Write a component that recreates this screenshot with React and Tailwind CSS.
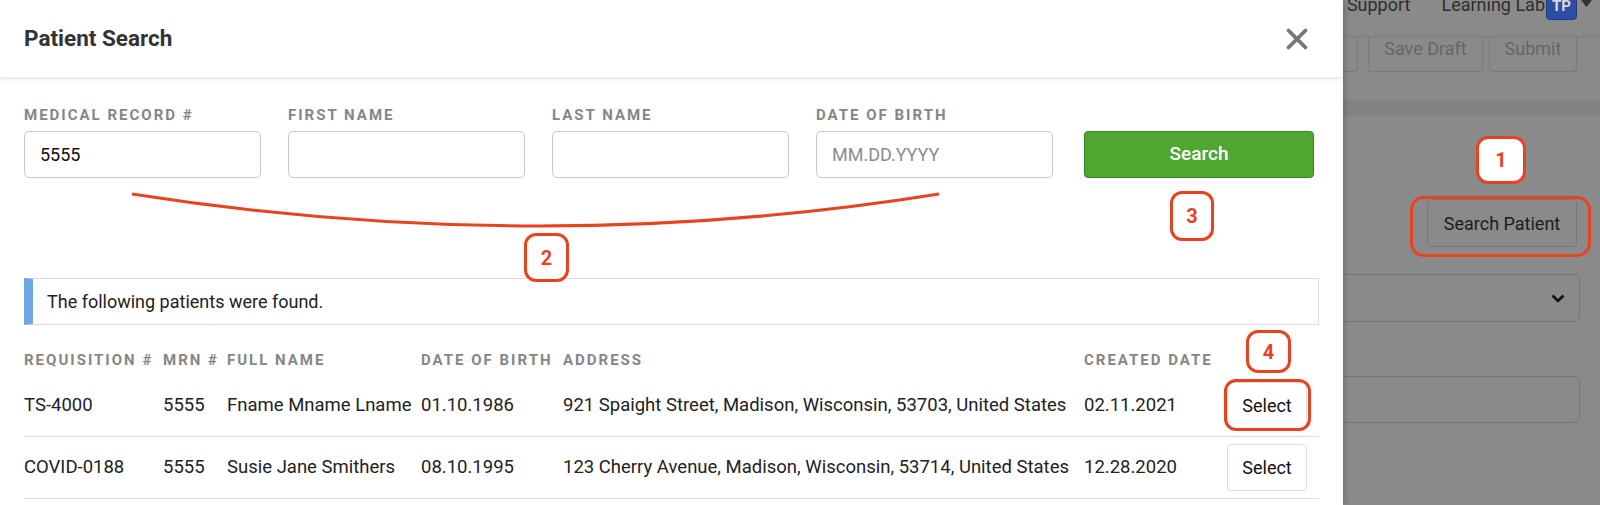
import { X } from 'lucide-react'

const font = { fontFamily: 'Roboto, "Liberation Sans", sans-serif' }

const fields = [
  { label: 'Medical Record #', value: '5555' },
  { label: 'First Name', value: '' },
  { label: 'Last Name', value: '' },
  { label: 'Date of Birth', value: '', placeholder: 'MM.DD.YYYY' },
]

const patients = [
  {
    req: 'TS-4000', mrn: '5555', name: 'Fname Mname Lname', dob: '01.10.1986',
    address: '921 Spaight Street, Madison, Wisconsin, 53703, United States', created: '02.11.2021',
  },
  {
    req: 'COVID-0188', mrn: '5555', name: 'Susie Jane Smithers', dob: '08.10.1995',
    address: '123 Cherry Avenue, Madison, Wisconsin, 53714, United States', created: '12.28.2020',
  },
]

const cols = 'grid grid-cols-[139px_64px_194px_142px_521px_143px_1fr] items-center'
const capLabel = 'text-[15px] font-bold uppercase tracking-[2px] text-[#868686]'

function Badge({ n, className }) {
  return (
    <div className={`absolute z-20 flex items-center justify-center rounded-[12px] border-[3px] border-[#e8431f] bg-white text-[20px] font-bold text-[#e8431f] ${className}`}>
      {n}
    </div>
  )
}

function PatientModal() {
  return (
    <div className="relative z-10 h-full w-[1343px] shrink-0 bg-white shadow-[2px_0_6px_rgba(0,0,0,0.18)]">
      {/* header */}
      <div className="relative z-10 flex h-[77px] items-center justify-between pl-6 pr-[29px] shadow-[0_2px_4px_rgba(0,0,0,0.1)]">
        <h1 className="text-[22.5px] font-bold text-[#333]">Patient Search</h1>
        <X size={34} strokeWidth={2.7} className="text-[#777]" />
      </div>

      {/* search form */}
      <div className="flex items-end gap-[27px] px-6 pt-[28px]">
        {fields.map(f => (
          <div key={f.label} className="w-[237px]">
            <label className={`${capLabel} block leading-5`}>{f.label}</label>
            <div className="mt-[6px] flex h-[47px] items-center rounded-[5px] border border-[#c8c8c8] px-[15px] text-[18px]">
              {f.value ? <span className="text-[#111]">{f.value}</span> : <span className="text-[#8c8c8c]">{f.placeholder}</span>}
            </div>
          </div>
        ))}
        <button className="ml-1 h-[47px] w-[230px] rounded-[4px] border border-[#2f8a1c] bg-[#4fa732] text-[19px] font-medium text-white">
          Search
        </button>
      </div>

      {/* results */}
      <div className="mx-6 mt-[100px] flex h-[47px] items-center border border-l-[9px] border-[#dcdcdc] border-l-[#6fa6e6] pl-[14px] text-[18px] text-[#222]">
        The following patients were found.
      </div>

      <div className="mx-6 mt-[20px]">
        <div className={`${cols} h-[30px] ${capLabel}`}>
          <div>Requisition #</div>
          <div>MRN #</div>
          <div>Full Name</div>
          <div>Date of Birth</div>
          <div>Address</div>
          <div>Created Date</div>
          <div />
        </div>
        {patients.map(p => (
          <div key={p.req} className={`${cols} h-[62px] border-b border-[#dcdcdc] text-[18.5px] text-[#222]`}>
            <div>{p.req}</div>
            <div>{p.mrn}</div>
            <div>{p.name}</div>
            <div>{p.dob}</div>
            <div className="whitespace-nowrap">{p.address}</div>
            <div>{p.created}</div>
            <div>
              <button className="h-[47px] w-[80px] rounded-[4px] border border-[#dcdcdc] bg-white text-[18px] text-[#111]">Select</button>
            </div>
          </div>
        ))}
      </div>
    </div>
  )
}

function BackgroundPage() {
  return (
    <div className="flex min-w-0 flex-1 flex-col overflow-hidden bg-[#8a8a8a]">
      {/* top nav, scrolled partly out of view */}
      <div className="flex h-[37px] shrink-0 items-start justify-end border-b border-[#7d7d7d] pr-2">
        <div className="-mt-[12px] flex h-[32px] items-center whitespace-nowrap text-[18px] text-[#2e2e2e]">
          <span>Support</span>
          <span className="ml-[31px]">Learning Lab</span>
          <span className="ml-px flex h-[32px] w-[31px] items-end justify-center rounded-[4px] border border-[#1f3a85] bg-[#2d4da6] pb-[2px] text-[15px] font-bold text-[#d8d8d8]">TP</span>
          <svg width="11" height="8" viewBox="0 0 11 8" className="ml-[4px]"><path d="M0 0h11L5.5 7z" fill="#333" /></svg>
        </div>
      </div>

      {/* toolbar */}
      <div className="flex h-[63px] shrink-0 items-start justify-end pr-[23px]">
        <div className="flex items-start whitespace-nowrap text-[18px] leading-[21px] text-[#666]">
          <div className="mr-[10px] h-[35px] w-[90px] shrink-0 rounded-b-[4px] border border-t-0 border-[#7a7a7a]" />
          <div className="mr-[6px] flex h-[35px] w-[115px] shrink-0 justify-center rounded-b-[4px] border border-t-0 border-[#7a7a7a] pt-[1px]">Save Draft</div>
          <div className="flex h-[35px] w-[88px] shrink-0 justify-center rounded-b-[4px] border border-t-0 border-[#7a7a7a] pt-[1px]">Submit</div>
        </div>
      </div>
      <div className="h-[17px] shrink-0 bg-[#838383]" />

      {/* form card */}
      <div className="flex flex-col items-end pr-[20px]">
        <button className="mr-[3px] mt-[82px] h-[48px] w-[150px] rounded-[4px] border border-[#787878] text-[18px] text-[#1c1c1c]">
          Search Patient
        </button>
        <div className="mt-[27px] flex h-[48px] w-[300px] items-center justify-end rounded-[6px] border border-[#767676] pr-[14px]">
          <svg width="14" height="9" viewBox="0 0 14 9"><path d="M1.5 1.5l5.5 5.5 5.5-5.5" fill="none" stroke="#111" strokeWidth="2.6" /></svg>
        </div>
        <div className="mt-[54px] h-[47px] w-[300px] rounded-[6px] border border-[#767676]" />
      </div>
    </div>
  )
}

export default function App() {
  return (
    <div className="relative flex h-[505px] w-[1600px] overflow-hidden" style={font}>
      <PatientModal />
      <BackgroundPage />

      {/* annotations */}
      <svg className="pointer-events-none absolute left-0 top-0 z-20" width="1600" height="505">
        <path d="M132 194 Q540 258 939 194" fill="none" stroke="#e8431f" strokeWidth="3" />
      </svg>
      <Badge n="1" className="left-[1476px] top-[136px] h-[48px] w-[50px]" />
      <Badge n="2" className="left-[524px] top-[233px] h-[49px] w-[45px]" />
      <Badge n="3" className="left-[1170px] top-[191px] h-[50px] w-[44px]" />
      <Badge n="4" className="left-[1246px] top-[330px] h-[43px] w-[45px]" />
      <div className="pointer-events-none absolute left-[1410px] top-[196px] z-20 h-[61px] w-[181px] rounded-[14px] border-[3px] border-[#e8431f]" />
      <div className="pointer-events-none absolute left-[1224px] top-[379px] z-20 h-[52px] w-[87px] rounded-[12px] border-[3px] border-[#e8431f]" />
    </div>
  )
}
